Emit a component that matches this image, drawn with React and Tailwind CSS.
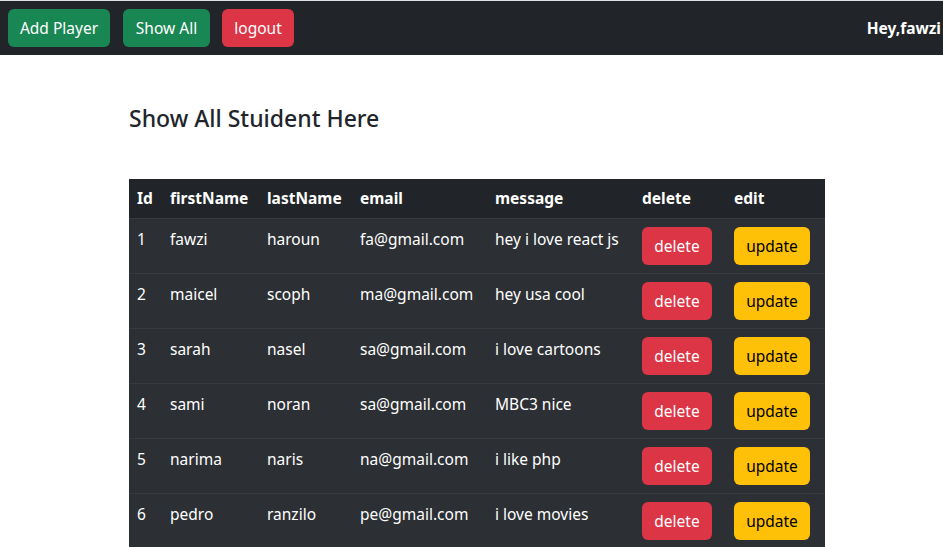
const students = [
  { id: 1, firstName: "fawzi", lastName: "haroun", email: "fa@gmail.com", message: "hey i love react js" },
  { id: 2, firstName: "maicel", lastName: "scoph", email: "ma@gmail.com", message: "hey usa cool" },
  { id: 3, firstName: "sarah", lastName: "nasel", email: "sa@gmail.com", message: "i love cartoons" },
  { id: 4, firstName: "sami", lastName: "noran", email: "sa@gmail.com", message: "MBC3 nice" },
  { id: 5, firstName: "narima", lastName: "naris", email: "na@gmail.com", message: "i like php" },
  { id: 6, firstName: "pedro", lastName: "ranzilo", email: "pe@gmail.com", message: "i love movies" },
];

function Navbar() {
  return (
    <nav className="flex h-[55px] items-center border-t border-[#dee2e6] bg-[#212529] pl-2 text-[15.5px]">
      <button className="h-[38px] w-[102px] rounded-md bg-[#198754] pt-[2px] text-white">Add Player</button>
      <button className="ml-[13px] h-[38px] w-[87px] rounded-md bg-[#198754] pt-[2px] text-white">Show All</button>
      <button className="ml-[12px] h-[38px] w-[72px] rounded-md bg-[#dc3545] pt-[2px] text-white">logout</button>
      <span className="ml-auto pr-[2px] pt-[2px] font-bold text-white">Hey,fawzi</span>
    </nav>
  );
}

export default function App() {
  return (
    <div className="min-h-screen bg-white font-['Noto_Sans','Open_Sans',sans-serif] text-[#212529]">
      <Navbar />
      <div className="ml-[129px] w-[696px]">
        <h3 className="mt-[50px] text-[23px] font-medium leading-[1.2]">Show All Stuident Here</h3>
        <table className="mt-[46px] w-[696px] table-fixed border-collapse text-[15.5px] text-white">
          <colgroup>
            <col className="w-[33px]" />
            <col className="w-[97px]" />
            <col className="w-[93px]" />
            <col className="w-[135px]" />
            <col className="w-[147px]" />
            <col className="w-[92px]" />
            <col className="w-[99px]" />
          </colgroup>
          <thead className="bg-[#212529]">
            <tr className="h-[40px]">
              {["Id", "firstName", "lastName", "email", "message", "delete", "edit"].map((h) => (
                <th key={h} className="h-[40px] px-2 text-left align-middle font-bold">{h}</th>
              ))}
            </tr>
          </thead>
          <tbody className="bg-[#2c3034]">
            {students.map((s) => (
              <tr key={s.id} className="border-t border-[#373b3e]">
                <td className="px-2 py-2 align-top leading-6">{s.id}</td>
                <td className="px-2 py-2 align-top leading-6">{s.firstName}</td>
                <td className="px-2 py-2 align-top leading-6">{s.lastName}</td>
                <td className="px-2 py-2 align-top leading-6 whitespace-nowrap">{s.email}</td>
                <td className="px-2 py-2 align-top leading-6 whitespace-nowrap">{s.message}</td>
                <td className="px-2 py-2 align-top">
                  <button className="h-[38px] w-[70px] rounded-md bg-[#dc3545] pt-[2px] text-white">delete</button>
                </td>
                <td className="px-2 py-2 align-top">
                  <button className="h-[38px] w-[76px] rounded-md bg-[#ffc107] pt-[2px] text-black">update</button>
                </td>
              </tr>
            ))}
          </tbody>
        </table>
      </div>
    </div>
  );
}
